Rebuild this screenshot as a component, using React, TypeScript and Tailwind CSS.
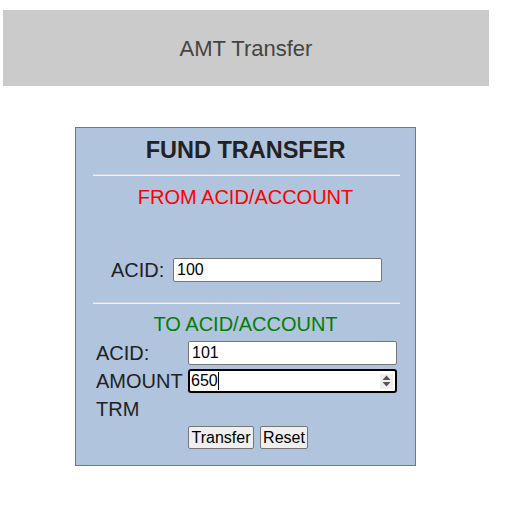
import React from "react";

export default function App() {
  const font = { fontFamily: '"Liberation Sans", Arial, sans-serif' };
  return (
    <div className="w-[517px] h-[518px] bg-white" style={font}>
      <div className="pt-[10px] pl-[3px]">
        <div className="w-[486px] h-[76px] bg-[#cbcbcb] flex items-center justify-center text-[22px] text-[#444]">
          AMT Transfer
        </div>
      </div>
      <div className="ml-[75px] mt-[41px] w-[341px] h-[339px] border border-[#777] bg-[#b0c4de] flex flex-col">
        <div className="h-[45px] leading-[45px] text-center text-[23.5px] font-bold text-[#222]">
          FUND TRANSFER
        </div>
        <div className="mt-[1px] ml-[17px] w-[307px] h-[2px] border-t border-[#cfd3d8] border-b border-b-[#eef1f5]" />
        <div className="mt-[9px] leading-[24px] text-center text-[20px] text-[#f00]">
          FROM ACID/ACCOUNT
        </div>
        <div className="mt-[49px] ml-[35px] flex items-center h-[24px]">
          <span className="w-[62px] text-[20px] text-[#222]">ACID:</span>
          <input
            readOnly
            defaultValue="100"
            className="w-[209px] h-[24px] bg-white border border-[#767676] rounded-[2px] pl-[3px] text-[16px] text-black outline-none"
            style={font}
          />
        </div>
        <div className="mt-[20px] ml-[17px] w-[307px] h-[2px] border-t border-[#cfd3d8] border-b border-b-[#eef1f5]" />
        <div className="mt-[8px] leading-[24px] text-center text-[20px] text-[#008000]">
          TO ACID/ACCOUNT
        </div>
        <div className="mt-[5px] ml-[20px] flex flex-col gap-[4px]">
          <div className="flex items-center h-[24px]">
            <span className="w-[92px] text-[20px] text-[#222]">ACID:</span>
            <input
              readOnly
              defaultValue="101"
              className="w-[209px] h-[24px] bg-white border border-[#767676] rounded-[2px] pl-[3px] text-[16px] text-black outline-none"
              style={font}
            />
          </div>
          <div className="flex items-center h-[24px]">
            <span className="w-[92px] text-[20px] text-[#222]">AMOUNT</span>
            <div className="w-[209px] h-[24px] bg-white border-2 border-black rounded-[3px] pl-[1px] pr-[2px] flex items-center text-[16px] text-black">
              <span>650</span>
              <span className="w-px h-[18px] bg-black" />
              <div className="ml-auto w-[13px] h-[15px] bg-[#efefef] flex items-center justify-center">
                <svg width="9" height="12" viewBox="0 0 9 12">
                  <polygon points="4.5,0.5 8.5,5 0.5,5" fill="#555" />
                  <polygon points="0.5,7 8.5,7 4.5,11.5" fill="#555" />
                </svg>
              </div>
            </div>
          </div>
          <div className="flex items-center h-[24px]">
            <span className="w-[92px] text-[20px] text-[#222]">TRM</span>
          </div>
        </div>
        <div className="mt-[5px] ml-[112px] flex gap-[6px]">
          <button
            className="w-[66px] h-[23px] p-0 border border-[#767676] rounded-[2px] bg-[#efefef] text-[16px] text-black leading-none text-center"
            style={font}
          >
            Transfer
          </button>
          <button
            className="w-[48px] h-[23px] p-0 border border-[#767676] rounded-[2px] bg-[#efefef] text-[16px] text-black leading-none text-center"
            style={font}
          >
            Reset
          </button>
        </div>
      </div>
    </div>
  );
}
